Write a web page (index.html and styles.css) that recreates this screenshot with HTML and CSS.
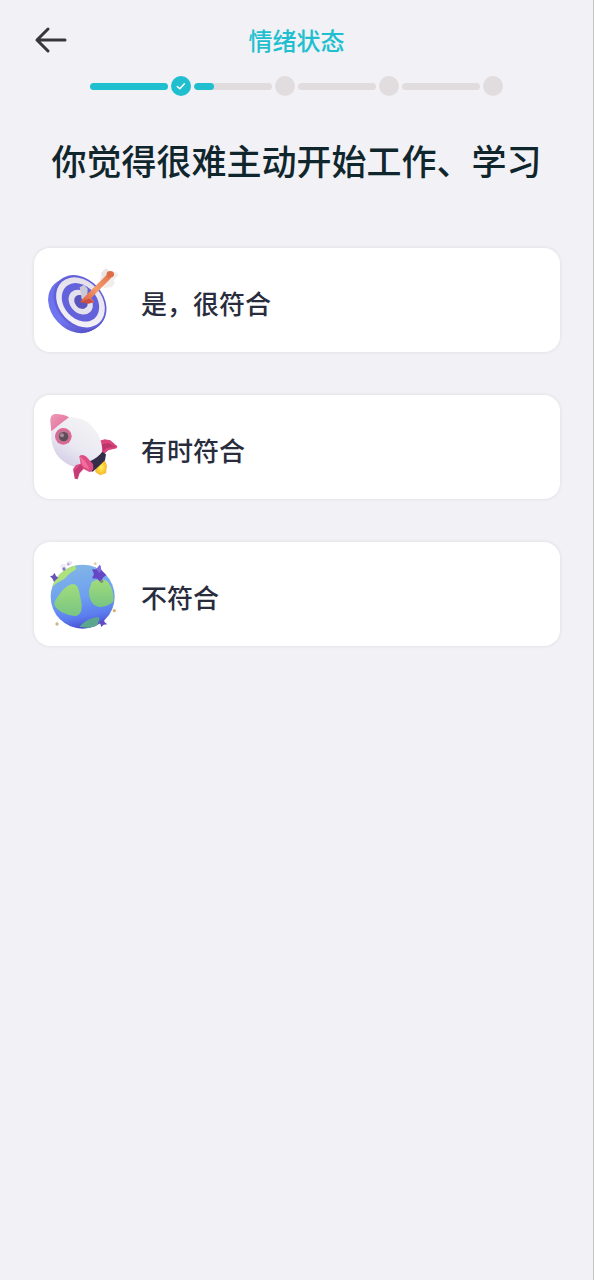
FILE: index.html
```html
<!DOCTYPE html>
<html lang="zh-CN">
<head>
  <meta charset="UTF-8" />
  <meta name="viewport" content="width=device-width, initial-scale=1.0"/>
  <title>情绪状态</title>
  <link rel="stylesheet" href="styles.css">
</head>
<body>
  <header>
    <button class="back-btn" aria-label="返回">
      <svg viewBox="0 0 34 28" width="34" height="28">
        <path d="M14 3 L3 14 L14 25 M3 14 H31" fill="none" stroke="#36373a" stroke-width="3" stroke-linecap="round" stroke-linejoin="round"/>
      </svg>
    </button>
    <h1>情绪状态</h1>
  </header>

  <div class="progress">
    <span class="bar full"></span>
    <span class="step done">
      <svg viewBox="0 0 20 20" width="20" height="20">
        <path d="M6.300 10.500 L8.800 12.800 L13.400 7.800" fill="none" stroke="#fff" stroke-width="1.500" stroke-linecap="round" stroke-linejoin="round"/>
      </svg>
    </span>
    <span class="bar quarter"></span>
    <span class="step"></span>
    <span class="bar"></span>
    <span class="step"></span>
    <span class="bar"></span>
    <span class="step"></span>
  </div>

  <main>
    <h2>你觉得很难主动开始工作、学习</h2>
    <div class="options">
      <button class="option">
        <!-- target -->
        <svg class="icon" viewBox="0 0 270 252">
          <defs>
            <linearGradient id="rim" x1="0" y1="0" x2="1" y2="0">
              <stop offset="0" stop-color="#6c70ec"/>
              <stop offset="0.5" stop-color="#7076f0"/>
              <stop offset="1" stop-color="#5750c4"/>
            </linearGradient>
            <linearGradient id="ring" x1="0" y1="0" x2="1" y2="1">
              <stop offset="0" stop-color="#e0dde8"/>
              <stop offset="1" stop-color="#f7f4f9"/>
            </linearGradient>
            <linearGradient id="shaft" x1="1" y1="0" x2="0" y2="1">
              <stop offset="0" stop-color="#e0744c"/>
              <stop offset="0.5" stop-color="#f59a6c"/>
              <stop offset="1" stop-color="#d8553d"/>
            </linearGradient>
          </defs>
          <g fill="url(#rim)">
            <ellipse cx="104" cy="144" rx="90" ry="70" transform="rotate(48 104 144)"/>
            <ellipse cx="110" cy="141" rx="90" ry="71" transform="rotate(48 110 141)"/>
            <ellipse cx="116" cy="138" rx="90" ry="72" transform="rotate(48 116 138)"/>
          </g>
          <g transform="rotate(48 120 133)">
            <ellipse cx="120" cy="133" rx="90" ry="70" fill="#6260da"/>
            <ellipse cx="121" cy="132" rx="83" ry="64" fill="url(#ring)"/>
            <ellipse cx="121" cy="132" rx="64" ry="49" fill="#6462da"/>
            <ellipse cx="121" cy="131" rx="41" ry="32" fill="#e4e1ee"/>
            <ellipse cx="121" cy="130" rx="23" ry="18" fill="#5a55bc"/>
          </g>
          <path d="M119 88 L132 80 L143 92 L142 112 L153 124 L137 132 L125 122 Z" fill="#cbc9d5"/>
          <path d="M180 64 L184 44 L197 31 L207 37 L209 46 L228 42 L236 50 L220 68 L225 75 L216 86 L193 91 Z" fill="#f2ecea"/>
          <path d="M197 31 L207 40 L203 54 L191 62 L184 45 Z" fill="#e9e3e1"/>
          <path d="M202 49 L214 59 L153 121 L163 132 L151 136 L120 132 L139 111 Z" fill="url(#shaft)"/>
          <ellipse cx="211" cy="49" rx="11" ry="10" fill="#dd6c46"/>
          <path d="M121 132 L148 122 L161 132 L145 137 Z" fill="#ca4e42"/>
        </svg>
        <span class="label">是，很符合</span>
      </button>

      <button class="option">
        <!-- rocket -->
        <svg class="icon" viewBox="0 0 270 252">
          <defs>
            <linearGradient id="hull" x1="0.900" y1="0" x2="0.300" y2="1">
              <stop offset="0" stop-color="#f5f5f6"/>
              <stop offset="0.6" stop-color="#eae9f2"/>
              <stop offset="1" stop-color="#d2cbe4"/>
            </linearGradient>
            <linearGradient id="nose" x1="0" y1="0" x2="1" y2="1">
              <stop offset="0" stop-color="#ee9bb5"/>
              <stop offset="1" stop-color="#e0669a"/>
            </linearGradient>
            <radialGradient id="flame">
              <stop offset="0" stop-color="#fff06c"/>
              <stop offset="0.6" stop-color="#fbce32"/>
              <stop offset="1" stop-color="#f4b738"/>
            </radialGradient>
          </defs>
          <path d="M166 185 L194 164 L201 182 L198 205 L180 211 L166 201 Z" fill="url(#flame)"/>
          <path d="M168 110 L194 103 L211 106 L232 124 L230 130 L205 136 L189 150 Z" fill="#d9447d"/>
          <path d="M181 119 L204 114 L228 126 L201 128 L188 139 Z" fill="#bd346a"/>
          <path d="M34 76 L85 37 C131 33 164 62 178 97 C187 120 189 136 184 151 L145 190 C112 196 70 177 49 147 C36 126 32 102 34 76 Z" fill="url(#hull)"/>
          <path d="M34 79 L31 49 C31 34 36 27 48 27 C61 27 77 30 87 37 C71 48 50 66 34 79 Z" fill="url(#nose)"/>
          <circle cx="70" cy="94" r="25" fill="#df6695"/>
          <circle cx="70" cy="94" r="19" fill="#bd7890"/>
          <circle cx="71" cy="95" r="14" fill="#604d5c"/>
          <circle cx="66" cy="91" r="6" fill="#a98a98"/>
          <path d="M145 171 C165 163 179 151 187 140 L198 148 L195 166 L174 186 L158 200 L143 195 Z" fill="#322e4a"/>
          <path d="M118 154 C125 147 134 151 142 158 L159 177 L160 193 L150 202 L131 192 L119 205 L113 223 L104 221 L99 192 L108 180 L122 176 Z" fill="#dd4c84"/>
          <path d="M118 154 C132 161 144 180 148 194 L129 184 Z" fill="#f16e9b"/>
          <path d="M102 198 L122 178 L130 189 L117 205 L112 222 L106 220 Z" fill="#c53b74"/>
        </svg>
        <span class="label">有时符合</span>
      </button>

      <button class="option">
        <!-- planet -->
        <svg class="icon" viewBox="0 0 270 252">
          <defs>
            <linearGradient id="sea" x1="0.400" y1="0" x2="0.600" y2="1">
              <stop offset="0" stop-color="#82b6e6"/>
              <stop offset="0.5" stop-color="#6e9ff0"/>
              <stop offset="0.8" stop-color="#5b7cee"/>
              <stop offset="1" stop-color="#4a48d0"/>
            </linearGradient>
            <linearGradient id="land" x1="0" y1="0" x2="0" y2="1">
              <stop offset="0" stop-color="#a1dc7b"/>
              <stop offset="1" stop-color="#78c583"/>
            </linearGradient>
            <clipPath id="globe"><circle cx="128" cy="134" r="96"/></clipPath>
          </defs>
          <ellipse cx="70" cy="43" rx="9" ry="8" fill="#eeeaf5"/>
          <ellipse cx="88" cy="33" rx="9" ry="6" fill="#ebe5f3"/>
          <circle cx="128" cy="134" r="96" fill="url(#sea)"/>
          <g clip-path="url(#globe)">
            <path d="M30 112 L34 90 L63 48 L103 36 L109 51 C97 60 85 65 76 78 C65 86 49 91 30 112 Z" fill="#aee27a"/>
            <path d="M47 144 C59 122 77 101 97 96 C110 96 115 106 118 121 L125 157 C127 178 119 193 103 192 C81 190 57 179 47 166 C42 159 42 151 47 144 Z" fill="url(#land)"/>
            <path d="M155 91 C164 82 184 79 200 86 C216 101 223 128 220 149 C210 158 186 170 168 162 C151 154 146 133 147 115 Z" fill="url(#land)"/>
            <path d="M119 224 C131 209 149 198 174 195 C182 198 178 209 166 230 Z" fill="#5aa78e"/>
          </g>
          <path d="M30 72 L37 71 L44 63 L48 72 L55 77 L48 83 L42 90 L38 81 Z" fill="#6854b8"/>
          <path d="M156 52 L169 52 L180 38 L184 54 L199 70 L190 76 L181 91 L172 80 L156 79 L162 67 Z" fill="#6547c5"/>
          <path d="M169 52 L180 38 L184 54 L179 64 Z" fill="#8168dc"/>
          <path d="M174 209 L184 208 L192 202 L194 211 L202 217 L191 218 L184 225 L181 216 Z" fill="#624bc4"/>
          <circle cx="72" cy="51" r="5" fill="#8176c4"/>
          <circle cx="85" cy="37" r="4" fill="#b9aad9"/>
          <circle cx="166" cy="35" r="4" fill="#e4ca9b"/>
          <circle cx="185" cy="88" r="5" fill="#77907d"/>
          <circle cx="223" cy="176" r="5" fill="#d6b675"/>
          <circle cx="51" cy="216" r="5" fill="#c8b887"/>
        </svg>
        <span class="label">不符合</span>
      </button>
    </div>
  </main>
</body>
</html>
```
FILE: styles.css
```css
:root {
  --bg: #f2f1f6;
  --text: #10262d;
  --label: #292c3c;
  --card: #ffffff;
  --primary: #20bfd0;
  --track: #e1dddf;
}
* {
  box-sizing: border-box;
}
body {
  margin: 0;
  min-height: 100vh;
  font-family: "Noto Sans CJK SC", sans-serif;
  background: var(--bg);
  color: var(--text);
  border-right: 1px solid #c5c4c9;
}
button {
  font-family: inherit;
  border: none;
  cursor: pointer;
}
header {
  display: grid;
  grid-template-columns: 34px 1fr 34px;
  align-items: center;
  padding: 20px 34px 0;
}
.back-btn {
  padding: 0;
  background: none;
}
.back-btn svg {
  display: block;
}
h1 {
  margin: 0;
  font-size: 24px;
  line-height: 40px;
  font-weight: 500;
  text-align: center;
  color: var(--primary);
}
.progress {
  display: flex;
  justify-content: center;
  align-items: center;
  gap: 3px;
  margin-top: 16px;
}
.bar {
  width: 78px;
  height: 7px;
  border-radius: 4px;
  background: var(--track);
  overflow: hidden;
}
.bar.full {
  background: var(--primary);
}
.bar.quarter::before {
  content: "";
  display: block;
  width: 25%;
  height: 100%;
  border-radius: 4px;
  background: var(--primary);
}
.step {
  width: 20px;
  height: 20px;
  border-radius: 50%;
  background: var(--track);
}
.step.done {
  background: var(--primary);
}
.step svg {
  display: block;
}
h2 {
  margin: 38px 0 62px;
  font-size: 35px;
  line-height: 52px;
  font-weight: 500;
  text-align: center;
}
.options {
  display: flex;
  flex-direction: column;
  gap: 43px;
  padding: 0 33px 0 34px;
}
.option {
  display: flex;
  align-items: center;
  gap: 11px;
  padding: 10px 6px;
  background: var(--card);
  border-radius: 16px;
  box-shadow: 0 0 3px 1px rgba(0, 0, 0, 0.06);
  text-align: left;
}
.icon {
  width: 90px;
  height: 84px;
  flex: none;
}
.label {
  padding-top: 6px;
  font-size: 26px;
  line-height: 40px;
  font-weight: 500;
  color: var(--label);
}
```
